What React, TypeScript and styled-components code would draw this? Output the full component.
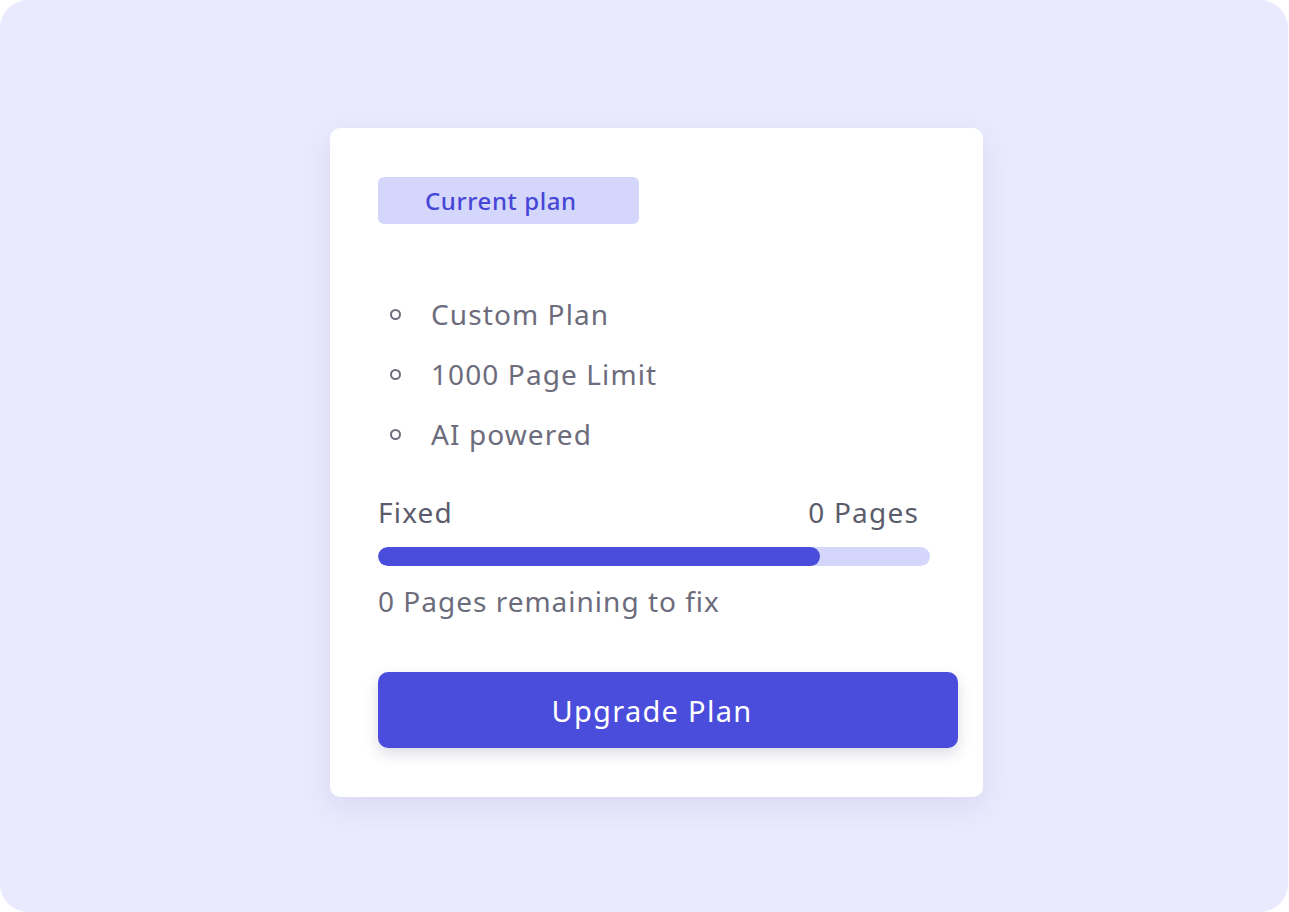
import React from 'react';
import styled, { createGlobalStyle } from 'styled-components';

const GlobalStyle = createGlobalStyle`
  html, body {
    margin: 0;
    padding: 0;
    background: #ffffff;
  }

  body {
    font-family: 'Noto Sans', 'Open Sans', Arial, sans-serif;
  }
`;

const Frame = styled.div`
  width: 1288px;
  height: 912px;
  box-sizing: border-box;
  border-radius: 28px;
  background: #e9eafd;
  padding: 128px 0 0 330px;
`;

const Card = styled.section`
  width: 653px;
  height: 669px;
  box-sizing: border-box;
  padding: 49px 25px 0 48px;
  background: #ffffff;
  border-radius: 10px;
  box-shadow: 0 10px 30px rgba(80, 80, 160, 0.1);
  display: flex;
  flex-direction: column;
`;

const Badge = styled.div`
  width: 261px;
  height: 47px;
  box-sizing: border-box;
  padding-left: 47px;
  display: flex;
  align-items: center;
  border-radius: 6px;
  background: #d4d6fb;
  color: #4646d6;
  font-size: 24px;
  font-weight: 500;
  letter-spacing: 0.6px;
`;

const Features = styled.ul`
  list-style: none;
  margin: 60px 0 0;
  padding: 0;
`;

const Feature = styled.li`
  height: 60px;
  display: flex;
  align-items: center;
  gap: 30px;
  padding-left: 12px;
  color: #6c6c7c;
  font-size: 28px;
  letter-spacing: 1.1px;
`;

const Dot = styled.span`
  width: 7px;
  height: 7px;
  border: 2px solid #6c6c7c;
  border-radius: 50%;
`;

const UsageRow = styled.div`
  width: 541px;
  height: 34px;
  margin-top: 31px;
  display: flex;
  justify-content: space-between;
  align-items: center;
  color: #5c5c6c;
  font-size: 28px;
  letter-spacing: 1.2px;
`;

const Track = styled.div`
  width: 552px;
  height: 19px;
  margin-top: 18px;
  border-radius: 10px;
  background: #d4d6fb;
  overflow: hidden;
`;

const Fill = styled.div`
  height: 100%;
  border-radius: 10px;
  background: #4a4ddb;
`;

const Remaining = styled.div`
  height: 34px;
  margin-top: 18px;
  display: flex;
  align-items: center;
  color: #6c6c7c;
  font-size: 28px;
  letter-spacing: 1px;
`;

const UpgradeButton = styled.button`
  width: 580px;
  height: 76px;
  margin-top: 54px;
  padding: 0 32px 0 0;
  border: none;
  border-radius: 10px;
  background: #4a4ddb;
  color: #ffffff;
  font-family: inherit;
  font-size: 29px;
  letter-spacing: 1.3px;
  box-shadow: 0 6px 14px rgba(60, 60, 120, 0.18);
  cursor: pointer;
`;

const features = ['Custom Plan', '1000 Page Limit', 'AI powered'];

export default function App() {
  const used = 0.8;

  return (
    <>
      <GlobalStyle />
      <Frame>
        <Card>
          <Badge>Current plan</Badge>
          <Features>
            {features.map((f) => (
              <Feature key={f}>
                <Dot />
                {f}
              </Feature>
            ))}
          </Features>
          <UsageRow>
            <span>Fixed</span>
            <span>0 Pages</span>
          </UsageRow>
          <Track>
            <Fill style={{ width: `${used * 100}%` }} />
          </Track>
          <Remaining>0 Pages remaining to fix</Remaining>
          <UpgradeButton>Upgrade Plan</UpgradeButton>
        </Card>
      </Frame>
    </>
  );
}
